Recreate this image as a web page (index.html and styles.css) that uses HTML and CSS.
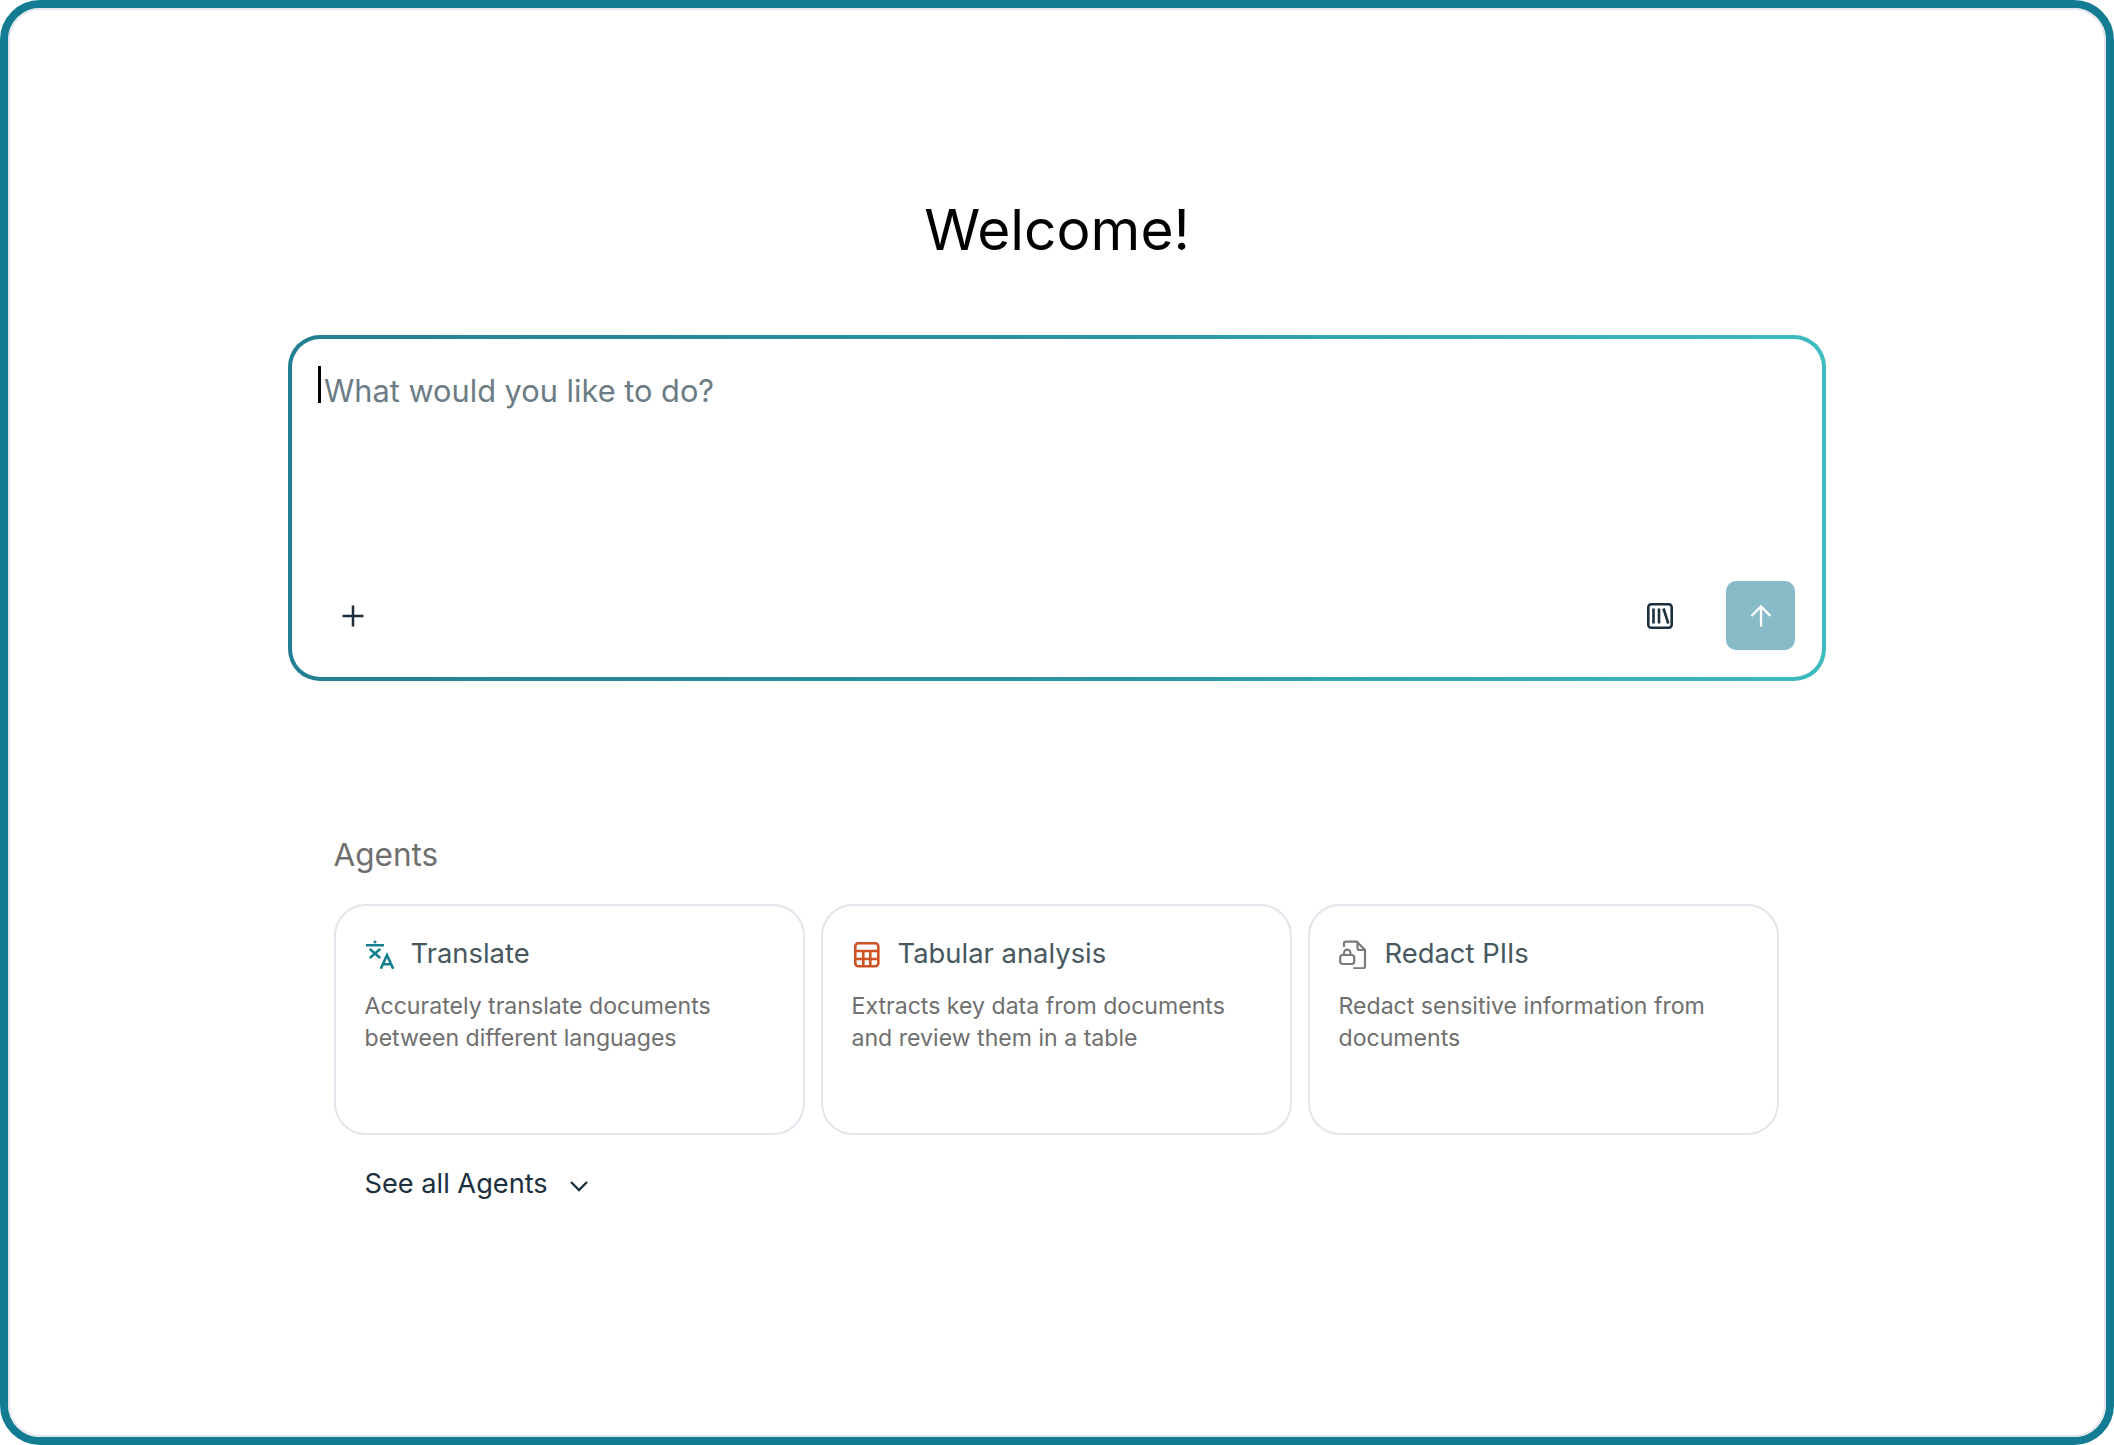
FILE: index.html
```html
<!DOCTYPE html>
<html lang="en">
<head>
<meta charset="utf-8">
<title>Welcome</title>
<link rel="stylesheet" href="styles.css">
</head>
<body>
<main class="frame">
  <div class="inner">
    <h1 class="title">Welcome!</h1>
    <section class="prompt">
      <div class="prompt-text"><span class="caret"></span><span class="placeholder">What would you like to do?</span></div>
      <div class="prompt-bar">
        <button class="icon-btn plus" aria-label="Add">
          <svg width="24" height="24" viewBox="0 0 24 24" fill="none" stroke="#1c2f3c" stroke-width="2.5"><path d="M12 1.500v21M1.500 12h21"/></svg>
        </button>
        <div class="bar-right">
          <button class="icon-btn" aria-label="Library">
            <svg width="28" height="28" viewBox="0 0 28 28" fill="none" stroke="#1c2f3c" stroke-width="2.600"><rect x="2.300" y="2.300" width="23.400" height="23.400" rx="3"/><path d="M7.500 6.500v15M13 6.500v15M17.500 6.500l4.800 15"/></svg>
          </button>
          <button class="send" aria-label="Send">
            <svg width="24" height="24" viewBox="0 0 24 24" fill="none" stroke="#fff" stroke-width="2.3"><path d="M12 22.500V2.500M2.500 12L12 2.500l9.500 9.500"/></svg>
          </button>
        </div>
      </div>
    </section>
    <section class="agents">
      <h2 class="agents-title">Agents</h2>
      <div class="cards">
        <article class="card">
          <div class="card-head">
            <svg class="card-icon" width="32" height="32" viewBox="-1 -3.700 32 32" fill="none" stroke="#13808f" stroke-width="2.600"><path d="M0 4.500h18M9 0v2.600M3.800 8.200l10.400 9M14.200 8.200l-10.400 9"/><path d="M14.800 28L21 14.500 27.200 28M16.800 23.500h8.400"/></svg>
            <span class="card-name">Translate</span>
          </div>
          <p class="card-desc">Accurately translate documents between different languages</p>
        </article>
        <article class="card">
          <div class="card-head">
            <svg class="card-icon" width="32" height="32" viewBox="0 0 32 32" fill="none" stroke="#cf5225" stroke-width="2.600"><rect x="3.300" y="6.300" width="23" height="23" rx="3"/><path d="M3.300 14h23M3.300 22h23M11.300 14v15M18.300 14v15"/></svg>
            <span class="card-name">Tabular analysis</span>
          </div>
          <p class="card-desc">Extracts key data from documents and review them in a table</p>
        </article>
        <article class="card">
          <div class="card-head">
            <svg class="card-icon" width="32" height="32" viewBox="0 0 32 32" fill="none" stroke="#7a7a7a" stroke-width="2.200"><path d="M5 10V6.700a2 2 0 0 1 2-2h10.700l8.300 8.300v16.300a2 2 0 0 1-2 2H14.300"/><path d="M18.500 4.700v6.300a2 2 0 0 0 2 2H26"/><rect x="1.200" y="18" width="14" height="9" rx="2.500"/><path d="M5 18v-2.200a3.200 3.200 0 0 1 6.400 0V18"/></svg>
            <span class="card-name">Redact PIIs</span>
          </div>
          <p class="card-desc">Redact sensitive information from documents</p>
        </article>
      </div>
      <button class="see-all">
        <span>See all Agents</span>
        <svg class="chevron" width="20" height="12" viewBox="0 0 20 12" fill="none" stroke="#1c2f3c" stroke-width="2.300"><path d="M2 2l8 8 8-8"/></svg>
      </button>
    </section>
  </div>
</main>
</body>
</html>
```

FILE: styles.css
```css
* { box-sizing: border-box; }
html, body { margin: 0; height: 100%; }
body { background: #fff; font-family: Inter, "Liberation Sans", sans-serif; }
.frame {
  height: 1445px;
  width: 2114px;
  border: 8px solid #137c92;
  border-radius: 40px;
  background: #fff;
  overflow: hidden;
}
.inner {
  height: 100%;
  border: 2px solid #e2e5ec;
  border-radius: 32px;
  display: flex;
  flex-direction: column;
  align-items: center;
  padding-top: 184px;
}
.title {
  margin: 0;
  font-size: 56.8px;
  line-height: 72px;
  font-weight: 400;
  color: #000;
}
.prompt {
  margin-top: 69px;
  width: 1538px;
  height: 346px;
  border: 4px solid transparent;
  border-radius: 32px;
  background:
    linear-gradient(#fff, #fff) padding-box,
    linear-gradient(90deg, #237f93 0%, #2b949f 50%, #3dbbc0 100%) border-box;
  padding: 27px 27px 27px 26px;
  display: flex;
  flex-direction: column;
  justify-content: space-between;
}
.prompt-text {
  display: flex;
  align-items: flex-start;
  height: 38px;
}
.caret { width: 3px; height: 37px; background: #000; margin-right: 3px; }
.placeholder { font-size: 30.75px; line-height: 38px; margin-top: 6px; color: #6b7c85; }
.prompt-bar {
  display: flex;
  justify-content: space-between;
  align-items: center;
}
.bar-right { display: flex; align-items: center; gap: 52px; }
.icon-btn {
  background: none;
  border: 0;
  padding: 0;
  display: flex;
  line-height: 0;
}
.plus { margin-left: 23px; }
.send {
  width: 69px;
  height: 69px;
  border: 0;
  border-radius: 10px;
  background: #87bbc8;
  display: flex;
  align-items: center;
  justify-content: center;
  padding: 0;
}
.agents {
  margin-top: 155px;
  width: 1446px;
  margin-left: -1px;
}
.agents-title {
  margin: 0;
  font-size: 31.5px;
  line-height: 38px;
  font-weight: 400;
  color: #6f6f6f;
}
.cards {
  margin-top: 30px;
  display: grid;
  grid-template-columns: repeat(3, 471px);
  gap: 16px;
}
.card {
  height: 231px;
  border: 2px solid #e2e5ec;
  border-radius: 32px;
  padding: 31px 29px;
}
.card-head {
  display: flex;
  align-items: center;
  gap: 14px;
  height: 32px;
}
.card-name { font-size: 27.4px; line-height: 32px; color: #46575f; }
.card-desc {
  margin: 21px 0 0;
  font-size: 23.1px;
  line-height: 32px;
  color: #6f6f6f;
}
.see-all {
  margin: 32px 0 0 31px;
  padding: 0;
  background: none;
  border: 0;
  display: flex;
  align-items: center;
  gap: 21px;
  font-family: inherit;
  font-size: 27.2px;
  line-height: 34px;
  color: #1c2f3c;
}
.chevron { margin-top: 3px; }
```
